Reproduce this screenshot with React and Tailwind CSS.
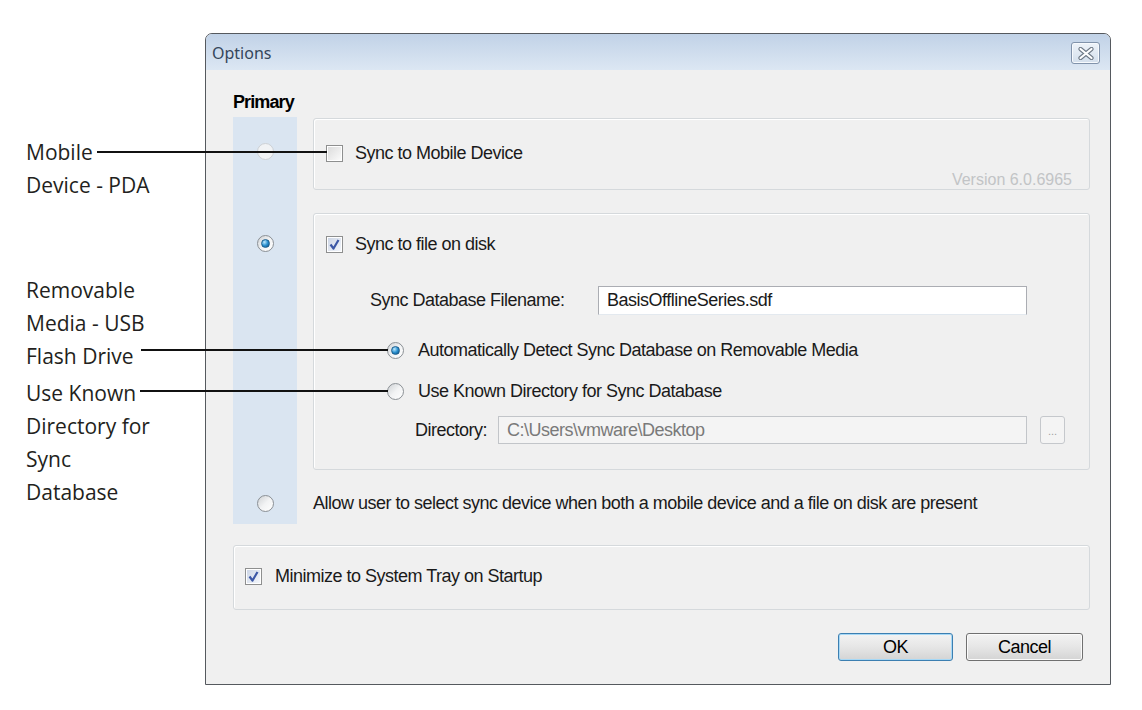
import React from "react";

const Radio = ({ checked = false, faint = false }) => (
  <span
    className={`flex h-[17px] w-[17px] shrink-0 items-center justify-center rounded-full border ${
      faint
        ? "border-[#cdd1d5] bg-[#f1f3f5]"
        : "border-[#8b9095] bg-linear-to-br from-[#cfd2d5] via-[#f2f3f4] to-white"
    }`}
  >
    {checked && (
      <span className="h-[9px] w-[9px] rounded-full border border-[#1d5f8f] bg-radial-[at_35%_30%] from-[#bfeaff] via-[#2a90cf] to-[#0b4a7c]" />
    )}
  </span>
);

const Checkbox = ({ checked = false }) => (
  <span className="flex h-[17px] w-[17px] shrink-0 items-center justify-center border border-[#8e8f8f] bg-white">
    <span
      className={`flex h-[13px] w-[13px] items-center justify-center bg-linear-to-br ${
        checked ? "from-[#cdd6e6] to-[#f3f6fb]" : "from-[#dcdcdc] to-[#fafafa]"
      }`}
    >
      {checked && (
        <svg width="11" height="11" viewBox="0 0 11 11">
          <path d="M1.5 5.5 L4.5 9.5 L9.5 1" fill="none" stroke="#3b57a6" strokeWidth="2.2" strokeLinejoin="round" />
        </svg>
      )}
    </span>
  </span>
);

const GroupBox = ({ className = "", children }) => (
  <div className={`rounded-[3px] border border-[#d5d9dc] shadow-[inset_1px_1px_0_#ffffff] ${className}`}>{children}</div>
);

const Button = ({ children, focused }) => (
  <button
    type="button"
    className={`h-[28px] rounded-[3px] border bg-linear-to-b from-[#f3f3f3] via-[#e6e6e6] to-[#d4d4d4] text-[18px] tracking-[-0.5px] text-black ${
      focused
        ? "w-[115px] border-[#3c7fb1] shadow-[inset_0_0_0_1px_#a6d8f6]"
        : "w-[117px] border-[#707070] shadow-[inset_0_0_0_1px_#fbfbfb]"
    }`}
  >
    {children}
  </button>
);

const CloseButton = () => (
  <div className="flex h-[22px] w-[29px] items-center justify-center rounded-[3px] border border-[#8193ab] bg-linear-to-b from-[#eef3f9] to-[#d3dfec] shadow-[inset_0_0_0_1px_#f7fafd]">
    <svg width="16" height="13" viewBox="0 0 16 13">
      <path d="M2.5 2 L13.5 11 M13.5 2 L2.5 11" stroke="#6d7885" strokeWidth="4.2" strokeLinecap="round" />
      <path d="M2.5 2 L13.5 11 M13.5 2 L2.5 11" stroke="#ffffff" strokeWidth="2.2" strokeLinecap="round" />
    </svg>
  </div>
);

const OptionsDialog = () => (
  <div className="flex h-[652px] w-[906px] shrink-0 flex-col rounded-t-[7px] border border-[#55595e] bg-[#f0f0f0] font-['Liberation_Sans',Arial,sans-serif] text-[18px] tracking-[-0.5px] text-[#1a1a1a]">
    {/* title bar */}
    <div className="flex h-[36px] items-start justify-between rounded-t-[6px] bg-linear-to-b from-[#c1d2e7] to-[#dce7f3] pl-[6px] pr-[10px]">
      <span className="pt-[9px] font-['Noto_Sans',sans-serif] text-[16px] leading-[20px] tracking-normal text-[#34465a]">Options</span>
      <div className="pt-[8px]">
        <CloseButton />
      </div>
    </div>

    <div className="flex flex-1 flex-col pl-[27px] pr-[20px]">
      <div className="mt-[22px] h-[20px] text-[18px] font-bold leading-[20px] tracking-[-0.9px] text-black">Primary</div>

      <div className="mt-[5px] flex flex-col">
        {/* mobile device */}
        <div className="flex h-[96px]">
          <div className="flex w-[64px] shrink-0 justify-center bg-[#dae5f1] pt-[26px]">
            <Radio faint />
          </div>
          <div className="ml-4 flex-1 pt-px">
            <GroupBox className="flex h-[72px] flex-col pl-[12px] pt-[24px]">
              <div className="flex h-5 items-center gap-3">
                <Checkbox />
                <span>Sync to Mobile Device</span>
              </div>
              <div className="mt-[7px] pr-[17px] text-right text-[16px] leading-[20px] tracking-normal text-[#c2c4c6]">Version 6.0.6965</div>
            </GroupBox>
          </div>
        </div>

        {/* file on disk */}
        <div className="flex h-[257px]">
          <div className="flex w-[64px] shrink-0 justify-center bg-[#dae5f1] pt-[22px]">
            <Radio checked />
          </div>
          <div className="ml-4 flex-1">
            <GroupBox className="flex h-[257px] flex-col pl-[12px] pt-[20px]">
              <div className="flex h-5 items-center gap-3">
                <Checkbox checked />
                <span>Sync to file on disk</span>
              </div>

              <div className="ml-[44px] mt-[32px] flex h-[29px] items-center">
                <span className="w-[228px]">Sync Database Filename:</span>
                <div className="flex h-[29px] w-[429px] items-center border border-[#abadb3] border-b-[#e3e9ef] bg-white pl-[8px]">
                  BasisOfflineSeries.sdf
                </div>
              </div>

              <div className="ml-[61px] mt-[25px] flex h-5 items-center gap-[14px]">
                <Radio checked />
                <span>Automatically Detect Sync Database on Removable Media</span>
              </div>
              <div className="ml-[61px] mt-[21px] flex h-5 items-center gap-[14px]">
                <Radio />
                <span>Use Known Directory for Sync Database</span>
              </div>

              <div className="ml-[89px] mt-[15px] flex h-[28px] items-center">
                <span className="w-[83px]">Directory:</span>
                <div className="flex h-[28px] w-[529px] items-center border border-[#c2c5c9] bg-[#f4f4f4] pl-[8px] text-[#7a7a7a]">
                  C:\Users\vmware\Desktop
                </div>
                <div className="ml-[13px] flex h-[28px] w-[25px] items-end justify-center rounded-[3px] border border-[#c5c8cc] bg-[#f4f4f4] pb-[6px] text-[11px] leading-none tracking-normal text-[#a0a0a0]">
                  ...
                </div>
              </div>
            </GroupBox>
          </div>
        </div>

        {/* let the user choose */}
        <div className="flex h-[54px]">
          <div className="flex w-[64px] shrink-0 justify-center bg-[#dae5f1] pt-[25px]">
            <Radio />
          </div>
          <div className="ml-4 mt-[23px] flex h-5 flex-1 items-center self-start">
            Allow user to select sync device when both a mobile device and a file on disk are present
          </div>
        </div>
      </div>

      <GroupBox className="mt-[21px] h-[65px] pl-[11px] pt-[20px]">
        <div className="flex h-5 items-center gap-[13px]">
          <Checkbox checked />
          <span>Minimize to System Tray on Startup</span>
        </div>
      </GroupBox>

      <div className="mt-[23px] flex justify-end gap-[13px] pr-[7px]">
        <Button focused>OK</Button>
        <Button>Cancel</Button>
      </div>
    </div>
  </div>
);

export default function App() {
  return (
    <div className="relative h-[710px] w-[1142px] overflow-hidden bg-white">
      <div className="flex pt-[33px]">
        {/* callout labels */}
        <div className="w-[205px] shrink-0 pl-[26px] font-['Open_Sans',sans-serif] text-[21px] leading-[33px] text-[#231f20]">
          <div className="mt-[103px]">
            <div>Mobile</div>
            <div>Device - PDA</div>
          </div>
          <div className="mt-[72px]">
            <div>Removable</div>
            <div>Media - USB</div>
            <div>Flash Drive</div>
          </div>
          <div className="mt-[4px]">
            <div>Use Known</div>
            <div>Directory for</div>
            <div>Sync</div>
            <div>Database</div>
          </div>
        </div>
        <OptionsDialog />
      </div>

      {/* leader lines */}
      <div className="absolute left-[97px] top-[151px] h-[2px] w-[230px] bg-[#111]" />
      <div className="absolute left-[141px] top-[349px] h-[2px] w-[247px] bg-[#111]" />
      <div className="absolute left-[140px] top-[390px] h-[2px] w-[248px] bg-[#111]" />
    </div>
  );
}
